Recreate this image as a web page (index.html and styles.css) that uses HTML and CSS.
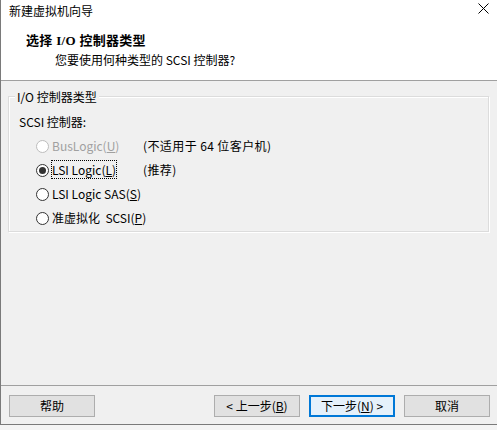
FILE: index.html
```html
<!DOCTYPE html>
<html lang="zh-CN">
<head>
<meta charset="utf-8">
<title>新建虚拟机向导</title>
<link rel="stylesheet" href="styles.css">
</head>
<body>
<div class="window">
  <div class="titlebar">
    <span class="title">新建虚拟机向导</span>
    <span class="close">
      <svg width="11" height="11" viewBox="0 0 11 11"><path d="M0.5 0.5 L10.5 10.5 M10.5 0.5 L0.5 10.5" stroke="#000" stroke-width="1" fill="none"/></svg>
    </span>
  </div>
  <div class="header">
    <div class="header-title">选择 I/O 控制器类型</div>
    <div class="header-sub">您要使用何种类型的 SCSI 控制器?</div>
  </div>
  <div class="content">
    <div class="group">
      <span class="legend">I/O 控制器类型</span>
      <div class="group-label">SCSI 控制器:</div>
      <div class="row disabled">
        <svg class="radio" width="13" height="13" viewBox="0 0 13 13"><circle cx="6.5" cy="6.5" r="6" fill="#fff" stroke="#bcbcbc"/></svg>
        <span class="opt">BusLogic(<u>U</u>)</span>
        <span class="note">(不适用于 64 位客户机)</span>
      </div>
      <div class="row">
        <svg class="radio" width="13" height="13" viewBox="0 0 13 13"><circle cx="6.5" cy="6.5" r="6" fill="#fff" stroke="#333"/><circle cx="6.5" cy="6.5" r="3.5" fill="#333"/></svg>
        <span class="opt"><span class="focus">LSI Logic(<u>L</u>)</span></span>
        <span class="note">(推荐)</span>
      </div>
      <div class="row">
        <svg class="radio" width="13" height="13" viewBox="0 0 13 13"><circle cx="6.5" cy="6.5" r="6" fill="#fff" stroke="#333"/></svg>
        <span class="opt wide">LSI Logic SAS(<u>S</u>)</span>
      </div>
      <div class="row">
        <svg class="radio" width="13" height="13" viewBox="0 0 13 13"><circle cx="6.5" cy="6.5" r="6" fill="#fff" stroke="#333"/></svg>
        <span class="opt wide">准虚拟化&nbsp; SCSI(<u>P</u>)</span>
      </div>
    </div>
    <div class="spacer"></div>
    <div class="footer">
      <button class="btn">帮助</button>
      <div class="footer-right">
        <button class="btn">&lt; 上一步(<u>B</u>)</button>
        <button class="btn default">下一步(<u>N</u>) &gt;</button>
        <button class="btn">取消</button>
      </div>
    </div>
  </div>
</div>
</body>
</html>
```
FILE: styles.css
```css
html, body {
  margin: 0;
  padding: 0;
  background: #f4f4f4;
}
body {
  font-family: "Noto Sans CJK SC", "Noto Sans", sans-serif;
  font-size: 12px;
  color: #000;
}
.window {
  width: 497px;
  height: 425px;
  box-sizing: border-box;
  border-left: 1px solid #7a7a7a;
  border-bottom: 1px solid #7a7a7a;
  background: #f0f0f0;
  display: flex;
  flex-direction: column;
}
.titlebar {
  height: 21px;
  background: #fff;
  display: flex;
  align-items: center;
  justify-content: space-between;
  padding-left: 8px;
  padding-right: 8px;
  line-height: 16px;
}
.close {
  display: flex;
  margin-top: -5px;
}
.header {
  height: 59px;
  background: #fff;
  border-bottom: 1px solid #a0a0a0;
  box-sizing: content-box;
  padding-left: 25px;
}
.header-title {
  font-family: "Liberation Serif", "Noto Sans CJK SC", serif;
  font-weight: bold;
  font-size: 13px;
  letter-spacing: 0.3px;
  line-height: 16px;
  margin-top: 12px;
}
.header-sub {
  line-height: 16px;
  margin-top: 3px;
  padding-left: 29px;
}
.content {
  flex: 1;
  display: flex;
  flex-direction: column;
}
.group {
  position: relative;
  margin: 15px 0 0 7px;
  width: 481px;
  height: 136px;
  box-sizing: border-box;
  border: 1px solid #dcdcdc;
  box-shadow: inset 1px 1px 0 #fff, 1px 1px 0 #fff;
  padding: 17px 0 0 10px;
}
.legend {
  position: absolute;
  top: -8px;
  left: 6px;
  padding: 0 2px;
  background: #f0f0f0;
  line-height: 16px;
}
.group-label {
  line-height: 16px;
  margin-bottom: 4px;
}
.row {
  height: 24px;
  display: flex;
  align-items: center;
  padding-left: 17px;
  white-space: nowrap;
}
.radio {
  flex: none;
  margin-right: 3px;
}
.opt {
  width: 91px;
  flex: none;
  line-height: 16px;
}
.opt.wide {
  width: auto;
}
.focus {
  outline: 1px dotted #000;
  outline-offset: 0;
}
.note {
  line-height: 16px;
  letter-spacing: 0.4px;
}
.disabled .opt {
  color: #a0a0a0;
}
.spacer {
  flex: 1;
}
.footer {
  border-top: 1px solid #a0a0a0;
  padding: 9px 7px 7px 8px;
  display: flex;
  justify-content: space-between;
}
.footer-right {
  display: flex;
  gap: 9px;
}
.btn {
  width: 86px;
  height: 22px;
  box-sizing: border-box;
  background: #e1e1e1;
  border: 1px solid #adadad;
  font-family: "Noto Sans CJK SC", "Noto Sans", sans-serif;
  font-size: 12px;
  color: #000;
  padding: 0;
  line-height: 16px;
}
.btn.default {
  border: 2px solid #0078d7;
  background: #e5f1fb;
}
```
